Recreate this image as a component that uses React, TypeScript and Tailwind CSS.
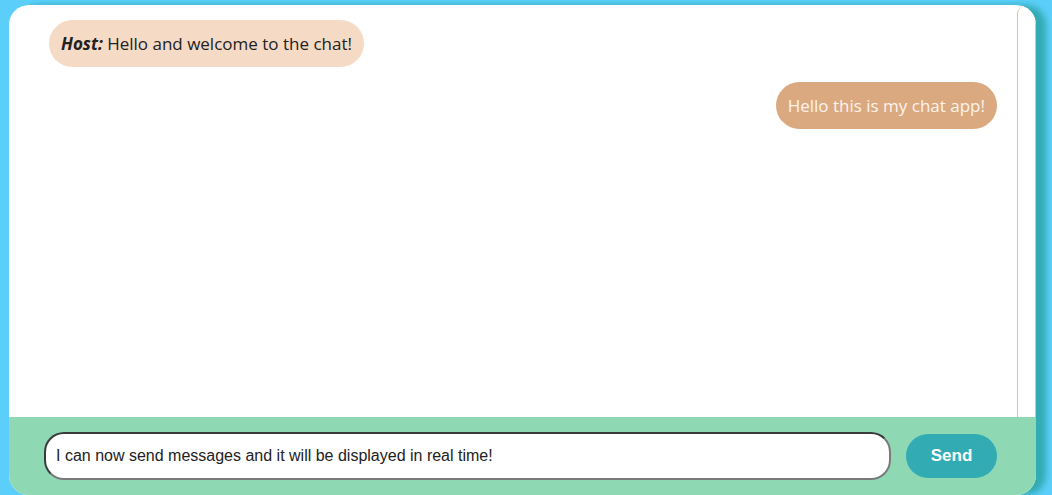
import React from "react";

const messages = [
  { id: 1, author: "Host", text: "Hello and welcome to the chat!", mine: false },
  { id: 2, author: "me", text: "Hello this is my chat app!", mine: true },
];

const App = () => {
  return (
    <div className="h-[495px] w-full overflow-hidden bg-[#5bcffa] pl-[9px] pt-[5px]">
      <div className="flex h-[490px] w-[1027px] flex-col overflow-hidden rounded-[20px] bg-white shadow-[10px_0_6px_#33abb3]">
        {/* messages */}
        <div className="flex min-h-0 flex-1">
          <div className="flex flex-1 flex-col gap-[15px] pl-[40px] pr-[20px] pt-[15px] font-['Open_Sans',sans-serif] text-[17px]">
            {messages.map((m) =>
              m.mine ? (
                <div key={m.id} className="flex justify-end">
                  <p className="rounded-[24px] bg-[#dba980] px-[12px] py-[11px] leading-[25px] text-[#fbf3ec]">
                    {m.text}
                  </p>
                </div>
              ) : (
                <div key={m.id} className="flex">
                  <p className="rounded-[24px] bg-[#f5dac5] px-[12px] py-[11px] leading-[25px] text-[#222]">
                    <b className="italic">{m.author}:</b> {m.text}
                  </p>
                </div>
              )
            )}
          </div>
          {/* scrollbar */}
          <div className="w-[19px] shrink-0 rounded-t-[10px] border-x border-[#e4bf9f] bg-white" />
        </div>
        {/* composer */}
        <div className="flex h-[78px] shrink-0 items-center gap-[15px] bg-[#8ed9b3] pl-[35px] pr-[39px]">
          <input
            className="h-[48px] flex-1 rounded-[20px] border-2 border-b-[#7a7a7a] border-l-[#3a3a3a] border-r-[#7a7a7a] border-t-[#3a3a3a] bg-white px-[10px] font-['Liberation_Sans',Arial,sans-serif] text-[16px] text-[#222] outline-none"
            defaultValue="I can now send messages and it will be displayed in real time!"
          />
          <button className="h-[44px] w-[91px] rounded-full bg-[#33abb3] font-['Liberation_Sans',Arial,sans-serif] text-[17px] font-bold text-white">
            Send
          </button>
        </div>
      </div>
    </div>
  );
};

export default App;
